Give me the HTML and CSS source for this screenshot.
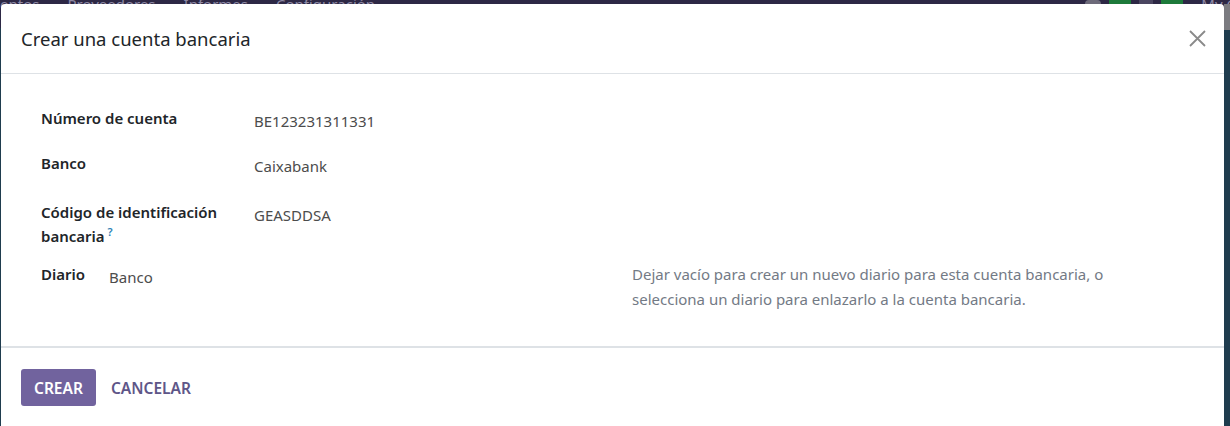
FILE: index.html
```html
<!DOCTYPE html>
<html lang="es">
<head>
<meta charset="utf-8">
<link rel="stylesheet" href="styles.css">
</head>
<body>
<div class="backdrop">
  <div class="navbar">
    <div class="menu"><span>entos</span><span>Proveedores</span><span>Informes</span><span>Configuración</span></div>
    <div class="systray"><i class="dot"></i><i class="sq"></i><i class="sq2"></i><i class="sq"></i><span>My C</span></div>
  </div>
  <div class="side-strip"></div>
  <div class="modal">
    <header class="modal-header">
      <h4 class="modal-title">Crear una cuenta bancaria</h4>
      <button class="close" aria-label="Cerrar">
        <svg width="17" height="17" viewBox="0 0 17 17"><path d="M1 1L16 16M16 1L1 16" stroke="#8a8a8a" stroke-width="1.8" fill="none"/></svg>
      </button>
    </header>
    <main class="modal-body">
      <div class="field-grid">
        <div class="label row1">Número de cuenta</div>
        <div class="value">BE123231311331</div>
        <div class="label row2">Banco</div>
        <div class="value">Caixabank</div>
        <div class="label row3">Código de identificación bancaria<sup class="help">?</sup></div>
        <div class="value">GEASDDSA</div>
      </div>
      <div class="journal-row">
        <div class="journal">
          <div class="label">Diario</div>
          <div class="value">Banco</div>
        </div>
        <p class="hint">Dejar vacío para crear un nuevo diario para esta cuenta bancaria, o selecciona un diario para enlazarlo a la cuenta bancaria.</p>
      </div>
    </main>
    <footer class="modal-footer">
      <button class="btn btn-primary">CREAR</button>
      <button class="btn btn-link">CANCELAR</button>
    </footer>
  </div>
</div>
</body>
</html>
```
FILE: styles.css
```css
html, body {
  margin: 0;
  padding: 0;
  height: 100%;
  overflow: hidden;
}
body {
  font-family: "Noto Sans", "Open Sans", sans-serif;
  color: #212529;
  background: #1f3c4e;
}
.backdrop {
  position: relative;
  height: 426px;
  background: #1f3c4e;
}
.navbar {
  height: 28px;
  background: #2d2845;
  color: #8f8aa6;
  font-size: 15px;
  line-height: 8px;
  display: flex;
  justify-content: space-between;
  overflow: hidden;
}
.menu {
  display: flex;
  gap: 28px;
  margin-left: 0;
}
.systray {
  display: flex;
  align-items: flex-start;
  gap: 8px;
  margin-right: -6px;
}
.systray i {
  display: block;
  height: 8px;
}
.systray .dot { width: 16px; background: #6d6a7a; border-radius: 8px; }
.systray .sq { width: 22px; background: #1d7a3a; }
.systray .sq2 { width: 14px; background: #4a4560; }
.systray span { margin-left: 10px; }
.side-strip {
  position: absolute;
  right: 0;
  top: 4px;
  width: 6px;
  height: 26px;
  background: #7b7b80;
}
.modal {
  position: absolute;
  left: 1px;
  top: 4px;
  width: 1223px;
  height: 430px;
  background: #fff;
  border-radius: 4px 4px 0 0;
  display: flex;
  flex-direction: column;
}
.modal-header {
  height: 70px;
  box-sizing: border-box;
  border-bottom: 1px solid #dee2e6;
  display: flex;
  align-items: center;
  justify-content: space-between;
  padding: 0 20px 0 20px;
}
.modal-title {
  margin: 0;
  font-size: 18.5px;
  font-weight: 400;
  color: #212529;
}
.close {
  background: none;
  border: 0;
  padding: 0;
  width: 17px;
  height: 17px;
  margin-right: -2px;
  cursor: pointer;
}
.modal-body {
  height: 274px;
  box-sizing: border-box;
  padding: 32px 40px 0 40px;
  border-bottom: 2px solid #dee2e6;
  font-size: 15px;
}
.field-grid {
  display: grid;
  grid-template-columns: 213px 1fr;
  row-gap: 0;
}
.label {
  font-weight: 600;
  line-height: 24px;
  color: #212529;
}
.value {
  color: #4c4c4c;
  line-height: 24px;
  padding-top: 3px;
}
.field-grid .value {
  padding-bottom: 18px;
}
.field-grid .row1 { padding-bottom: 21px; }
.field-grid .row2 { padding-bottom: 25px; }
.field-grid .row3 {
  width: 190px;
  padding-bottom: 14px;
}
.help {
  color: #2f7fb5;
  font-size: 11px;
  font-weight: 600;
  margin-left: 3px;
  line-height: 0;
  vertical-align: 6px;
}
.journal-row {
  display: flex;
}
.journal {
  flex: 0 0 591px;
  display: flex;
  gap: 24px;
}
.hint {
  margin: 0;
  width: 510px;
  color: #737a85;
  line-height: 25px;
  font-size: 15px;
}
.modal-footer {
  display: flex;
  align-items: center;
  padding: 21px 20px;
}
.btn {
  font-family: inherit;
  font-size: 15.5px;
  font-weight: 600;
  border: 0;
  border-radius: 3px;
  height: 37px;
  padding: 0 13px;
  cursor: pointer;
}
.btn-primary {
  background: #71639e;
  color: #fff;
}
.btn-link {
  background: none;
  color: #5e5688;
  margin-left: 2px;
}
```
